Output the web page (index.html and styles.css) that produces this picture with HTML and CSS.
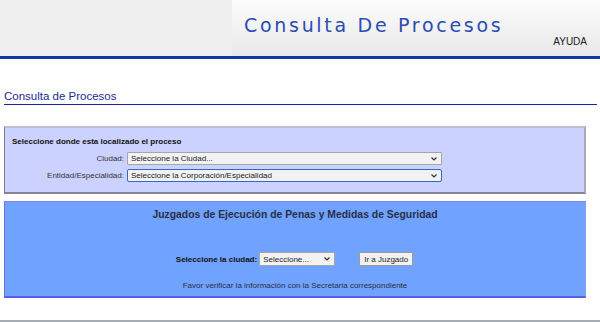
FILE: index.html
```html
<!DOCTYPE html>
<html lang="es">
<head>
    <meta charset="UTF-8">
    <title>Consulta De Procesos</title>
    <link rel="stylesheet" href="styles.css">
</head>
<body>
    <div class="topbar">
        <div class="topbar-left"></div>
        <div class="topbar-right">
            <div class="brand">Consulta De Procesos</div>
            <div class="help"><a href="#">AYUDA</a></div>
        </div>
    </div>

    <div class="content">
        <div class="page-title">Consulta de Procesos</div>

        <!-- Ubicacion del proceso -->
        <div class="panel panel-location">
            <div class="panel-caption">Seleccione donde esta localizado el proceso</div>
            <div class="form-grid">
                <label class="form-label">Ciudad:</label>
                <select class="field">
                    <option>Seleccione la Ciudad...</option>
                </select>
                <label class="form-label">Entidad/Especialidad:</label>
                <select class="field field-focus">
                    <option>Seleccione la Corporación/Especialidad</option>
                </select>
            </div>
        </div>

        <!-- Juzgados de ejecucion -->
        <div class="panel panel-court">
            <div class="court-title">Juzgados de Ejecución de Penas y Medidas de Seguridad</div>
            <div class="court-row">
                <label class="court-label">Seleccione la ciudad:</label>
                <select class="field field-small">
                    <option>Seleccione...</option>
                </select>
                <button class="go-btn">Ir a Juzgado</button>
            </div>
            <div class="court-note">Favor verificar la información con la Secretaria correspondiente</div>
        </div>
    </div>

    <div class="bottom-rule"></div>
</body>
</html>
```

FILE: styles.css
```css
* { margin: 0; padding: 0; box-sizing: border-box; }
body {
    font-family: "Liberation Sans", Arial, sans-serif;
    background: #fff;
    color: #222;
    width: 600px;
    height: 322px;
    overflow: hidden;
}

/* cabecera */
.topbar {
    display: flex;
    height: 59px;
    border-bottom: 3px solid #0c3ba6;
}
.topbar-left { width: 232px; background: #efefef; }
.topbar-right {
    flex: 1;
    display: flex;
    flex-direction: column;
    background: linear-gradient(to bottom, #fcfcfc, #e8e8e8);
    padding: 14px 13px 0 12px;
}
.brand {
    font-family: "DejaVu Sans", sans-serif;
    font-size: 19px;
    line-height: 22px;
    letter-spacing: 2.7px;
    color: #2c4cb2;
}
.help { text-align: right; margin-top: -5px; }
.help a {
    font-size: 10px;
    color: #222;
    text-decoration: none;
}

.content { padding: 0 3px 0 4px; }

.page-title {
    margin-top: 30px;
    font-size: 11.5px;
    line-height: 15px;
    color: #1c2a8e;
    border-bottom: 1px solid #1a22b0;
}

.panel { margin-right: 11px; }

.panel-location {
    margin-top: 21px;
    background: #ccd2ff;
    border-top: 2px solid #bcbfd0;
    border-left: 1px solid #7a7a88;
    border-right: 2px solid #a8a8b8;
    border-bottom: 2px solid #85858f;
    padding: 9px 7px 10px 7px;
}
.panel-caption {
    font-size: 8px;
    font-weight: bold;
    line-height: 10px;
    color: #111;
}
.form-grid {
    display: grid;
    grid-template-columns: 112px 315px;
    column-gap: 3px;
    row-gap: 4px;
    align-items: center;
    margin-top: 5px;
}
.form-label {
    text-align: right;
    font-size: 8px;
    color: #333;
}
.field {
    appearance: none;
    -webkit-appearance: none;
    height: 13px;
    font-family: "Liberation Sans", Arial, sans-serif;
    font-size: 8px;
    color: #222;
    background-color: #f2f2f2;
    background-image: url("data:image/svg+xml,%3Csvg xmlns='http://www.w3.org/2000/svg' width='6' height='4' viewBox='0 0 6 4'%3E%3Cpath d='M0.5 0.5 L3 3 L5.5 0.5' fill='none' stroke='%23333' stroke-width='1.2'/%3E%3C/svg%3E");
    background-repeat: no-repeat;
    background-position: right 4px center;
    border: 1px solid #a6a6a6;
    border-radius: 1px;
    padding: 0 12px 0 3px;
}
.field-focus {
    border-color: #2f6bc4;
    border-radius: 2px;
}

.panel-court {
    margin-top: 7px;
    background: #70a2ff;
    border-top: 1px solid #8a80f6;
    border-left: 1px solid #6a74e8;
    border-right: 1px solid #8a9ef4;
    border-bottom: 2px solid #5660e4;
    padding: 6px 0 5px 0;
    text-align: center;
}
.court-title {
    font-size: 10.4px;
    font-weight: bold;
    line-height: 14px;
    color: #2a2f45;
}
.court-row {
    display: flex;
    justify-content: center;
    align-items: center;
    margin-top: 30px;
    padding-right: 1px;
}
.court-label {
    font-size: 8px;
    font-weight: bold;
    color: #111;
    margin-right: 2px;
}
.field-small { width: 76px; height: 14px; }
.go-btn {
    margin-left: 24px;
    height: 14px;
    padding: 0 4px;
    font-family: "Liberation Sans", Arial, sans-serif;
    font-size: 8px;
    color: #222;
    background: #f2f2f2;
    border: 1px solid #9a9a9a;
    border-radius: 1px;
}
.court-note {
    margin-top: 15px;
    font-size: 8px;
    line-height: 10px;
    color: #2a2f45;
}

.bottom-rule {
    position: absolute;
    left: 0;
    right: 0;
    top: 320px;
    height: 2px;
    background: #a6acb4;
}
```
